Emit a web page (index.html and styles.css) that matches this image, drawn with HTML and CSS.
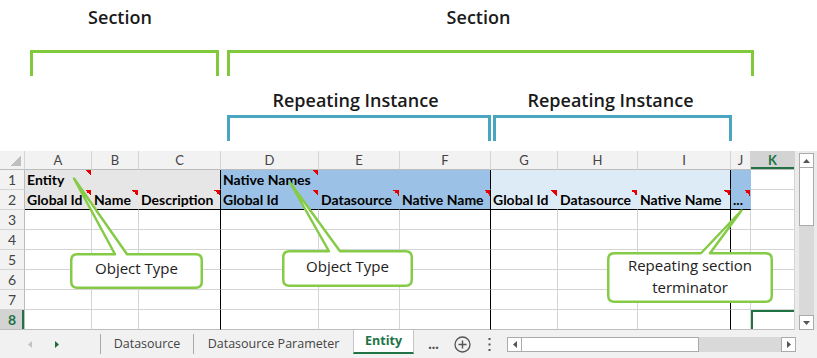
FILE: index.html
```html
<!DOCTYPE html>
<html lang="en">
<head>
    <meta charset="UTF-8">
    <title>Entity sheet layout</title>
    <link rel="stylesheet" href="styles.css">
</head>
<body>
<div class="page">

    <!-- Annotations above the sheet -->
    <div class="annot">
        <div class="sections">
            <div class="group g-sec1">
                <div class="group-label">Section</div>
                <div class="bracket green"></div>
            </div>
            <div class="group g-sec2">
                <div class="group-label">Section</div>
                <div class="bracket green"></div>
            </div>
        </div>
        <div class="instances">
            <div class="group g-inst1">
                <div class="group-label">Repeating Instance</div>
                <div class="bracket blue"></div>
            </div>
            <div class="group g-inst2">
                <div class="group-label">Repeating Instance</div>
                <div class="bracket blue"></div>
            </div>
        </div>
    </div>

    <!-- Worksheet -->
    <div class="workbook">
        <div class="sheet">
            <div class="corner"><span class="corner-tri"></span></div>
            <div class="ch">A</div><div class="ch">B</div><div class="ch">C</div><div class="ch">D</div>
            <div class="ch">E</div><div class="ch">F</div><div class="ch">G</div><div class="ch">H</div>
            <div class="ch">I</div><div class="ch">J</div><div class="ch sel">K</div>

            <div class="rh">1</div>
            <div class="c f-grey cm">Entity</div><div class="c f-grey"></div><div class="c f-grey br"></div>
            <div class="c f-blue cm">Native Names</div><div class="c f-blue"></div><div class="c f-blue br"></div>
            <div class="c f-light"></div><div class="c f-light"></div><div class="c f-light br"></div>
            <div class="c f-blue"></div><div class="c"></div>

            <div class="rh">2</div>
            <div class="c f-grey bb cm">Global Id</div><div class="c f-grey bb cm">Name</div><div class="c f-grey bb br cm">Description</div>
            <div class="c f-blue bb cm">Global Id</div><div class="c f-blue bb cm">Datasource</div><div class="c f-blue bb br cm">Native Name</div>
            <div class="c f-light bb cm">Global Id</div><div class="c f-light bb cm">Datasource</div><div class="c f-light bb br cm">Native Name</div>
            <div class="c f-blue bb cm">...</div><div class="c"></div>

            <div class="rh">3</div>
            <div class="c"></div><div class="c"></div><div class="c br"></div><div class="c"></div><div class="c"></div><div class="c br"></div>
            <div class="c"></div><div class="c"></div><div class="c br"></div><div class="c"></div><div class="c"></div>

            <div class="rh">4</div>
            <div class="c"></div><div class="c"></div><div class="c br"></div><div class="c"></div><div class="c"></div><div class="c br"></div>
            <div class="c"></div><div class="c"></div><div class="c br"></div><div class="c"></div><div class="c"></div>

            <div class="rh">5</div>
            <div class="c"></div><div class="c"></div><div class="c br"></div><div class="c"></div><div class="c"></div><div class="c br"></div>
            <div class="c"></div><div class="c"></div><div class="c br"></div><div class="c"></div><div class="c"></div>

            <div class="rh">6</div>
            <div class="c"></div><div class="c"></div><div class="c br"></div><div class="c"></div><div class="c"></div><div class="c br"></div>
            <div class="c"></div><div class="c"></div><div class="c br"></div><div class="c"></div><div class="c"></div>

            <div class="rh">7</div>
            <div class="c"></div><div class="c"></div><div class="c br"></div><div class="c"></div><div class="c"></div><div class="c br"></div>
            <div class="c"></div><div class="c"></div><div class="c br"></div><div class="c"></div><div class="c"></div>

            <div class="rh sel">8</div>
            <div class="c"></div><div class="c"></div><div class="c br"></div><div class="c"></div><div class="c"></div><div class="c br"></div>
            <div class="c"></div><div class="c"></div><div class="c br"></div><div class="c"></div><div class="c sel"></div>
        </div>

        <div class="vscroll">
            <div class="sb-btn">
                <svg width="7" height="4" viewBox="0 0 7 4"><polygon points="0,4 3.5,0 7,4" fill="#555"/></svg>
            </div>
            <div class="sb-thumb"></div>
            <div class="sb-track"></div>
            <div class="sb-btn">
                <svg width="7" height="4" viewBox="0 0 7 4"><polygon points="0,0 7,0 3.5,4" fill="#555"/></svg>
            </div>
        </div>
    </div>

    <!-- Sheet tabs -->
    <div class="tabbar">
        <div class="tab-nav">
            <svg width="4" height="7" viewBox="0 0 4 7"><polygon points="4,0 4,7 0,3.5" fill="#c2c2c2"/></svg>
            <svg class="nav-next" width="4" height="7" viewBox="0 0 4 7"><polygon points="0,0 4,3.5 0,7" fill="#1e6b3d"/></svg>
        </div>
        <div class="tab-sep"></div>
        <div class="tab">Datasource</div>
        <div class="tab-sep"></div>
        <div class="tab tab-wide">Datasource Parameter</div>
        <div class="tab tab-active">Entity</div>
        <div class="tab-tools">
            <span class="tool-more">...</span>
            <svg class="tool-add" width="17" height="17" viewBox="0 0 17 17">
                <circle cx="8.5" cy="8.5" r="7.5" fill="none" stroke="#555" stroke-width="1.3"/>
                <path d="M8.5 4.5v8M4.5 8.5h8" stroke="#555" stroke-width="1.4"/>
            </svg>
            <svg class="tool-menu" width="3" height="13" viewBox="0 0 3 13">
                <rect x="0.5" y="0" width="2" height="2" fill="#555"/>
                <rect x="0.5" y="5.5" width="2" height="2" fill="#555"/>
                <rect x="0.5" y="11" width="2" height="2" fill="#555"/>
            </svg>
        </div>
        <div class="hscroll">
            <div class="sb-btn">
                <svg width="4" height="7" viewBox="0 0 4 7"><polygon points="4,0 4,7 0,3.5" fill="#555"/></svg>
            </div>
            <div class="sb-thumb"></div>
            <div class="sb-track"></div>
            <div class="sb-btn">
                <svg width="4" height="7" viewBox="0 0 4 7"><polygon points="0,0 4,3.5 0,7" fill="#555"/></svg>
            </div>
        </div>
    </div>

    <!-- Callouts drawn over the sheet -->
    <svg class="callouts" width="817" height="358" viewBox="0 0 817 358">
        <path d="M77.25 254.25H115L74 178.5L127 254.25H195.75Q201.75 254.25 201.75 260.25V281.75Q201.75 287.75 195.75 287.75H77.25Q71.25 287.75 71.25 281.75V260.25Q71.25 254.25 77.25 254.25Z"/>
        <path d="M289.25 251.25H329L290 182.5L340 251.25H405.75Q411.75 251.25 411.75 257.25V279.75Q411.75 285.75 405.75 285.75H289.25Q283.25 285.75 283.25 279.75V257.25Q283.25 251.25 289.25 251.25Z"/>
        <path d="M614.25 253.25H701L741.5 210.5L710 253.25H765.75Q771.75 253.25 771.75 259.25V295.75Q771.75 301.75 765.75 301.75H614.25Q608.25 301.75 608.25 295.75V259.25Q608.25 253.25 614.25 253.25Z"/>
    </svg>
    <div class="callout-text c1">Object Type</div>
    <div class="callout-text c2">Object Type</div>
    <div class="callout-text c3">Repeating section<br>terminator</div>

</div>
</body>
</html>
```

FILE: styles.css
```css
body {
    margin: 0;
    background-color: #fff;
    font-family: "Open Sans", Arial, sans-serif;
}
.page {
    position: relative;
    width: 817px;
    height: 358px;
    overflow: hidden;
}

/* annotations */
.sections {
    display: flex;
    gap: 8px;
    padding-left: 30px;
    height: 76px;
}
.instances {
    display: flex;
    gap: 2px;
    padding-left: 227px;
    height: 65px;
    margin-bottom: 10px;
}
.group {
    display: flex;
    flex-direction: column;
}
.g-sec1 { width: 189px; }
.g-sec2 { width: 527px; }
.g-inst1 { width: 264px; }
.g-inst2 { width: 239px; }
.group-label {
    box-sizing: border-box;
    text-align: center;
    font-weight: 600;
    font-size: 18px;
    line-height: 24px;
    color: #1a1a1a;
    white-space: nowrap;
}
.sections .group-label {
    height: 50px;
    padding-top: 5px;
}
.g-sec1 .group-label { padding-right: 9px; }
.g-sec2 .group-label { padding-right: 24px; }
.instances .group-label {
    height: 39px;
    padding-top: 12px;
}
.g-inst1 .group-label { padding-right: 7px; }
.g-inst2 .group-label { padding-right: 4px; }
.bracket {
    flex: 1;
    border: 3px solid;
    border-bottom: 0;
}
.bracket.green { border-color: #7fc93b; }
.bracket.blue { border-color: #4aa6c0; }

/* worksheet */
.workbook {
    display: flex;
    height: 179px;
}
.sheet {
    display: grid;
    grid-template-columns: 25px 67px 47px 82px 98px 81px 91px 67px 80px 93px 20px 44px;
    grid-template-rows: 19px repeat(8, 20px);
    width: 795px;
}
.sheet > div {
    box-sizing: border-box;
    border-right: 1px solid #d4d4d4;
    border-bottom: 1px solid #d4d4d4;
}
.sheet > div:nth-last-child(-n+12) {
    border-bottom-color: #bdbdbd;
}
.corner, .ch, .rh {
    background-color: #f2f2f2;
    color: #444;
    font-family: Lato, "Liberation Sans", sans-serif;
}
.corner {
    display: flex;
    align-items: flex-end;
    justify-content: flex-end;
    padding: 0 3px 3px 0;
    border-bottom-color: #bcbcbc !important;
}
.corner-tri {
    width: 10px;
    height: 11px;
    background: linear-gradient(to top left, #bfbfbf 50%, transparent 50%);
}
.ch {
    text-align: center;
    font-size: 13px;
    line-height: 18px;
    border-bottom-color: #bcbcbc !important;
}
.rh {
    text-align: center;
    font-size: 14px;
    line-height: 20px;
    border-right-color: #bcbcbc !important;
}
.ch.sel, .rh.sel {
    background-color: #d3d3d3;
    color: #217346;
    font-weight: 700;
}
.ch.sel { box-shadow: inset 0 -2px 0 #217346; }
.rh.sel { box-shadow: inset -2px 0 0 #217346; }

.c {
    font-family: Lato, "Liberation Sans", sans-serif;
    font-weight: 700;
    font-size: 14px;
    line-height: 20px;
    color: #000;
    padding-left: 2px;
    white-space: nowrap;
}
.c.sel { box-shadow: inset 2px 2px 0 #217346; }
.f-grey { background-color: #e7e6e6; border-color: #e7e6e6 !important; }
.f-blue { background-color: #9bc2e6; border-color: #9bc2e6 !important; }
.f-light { background-color: #ddebf7; border-color: #ddebf7 !important; }
.sheet > .br { border-right-color: #000 !important; }
.sheet > .bb { border-bottom-color: #000 !important; }
.cm {
    background-image: linear-gradient(to bottom left, #e60000 50%, transparent 50%);
    background-size: 6px 6px;
    background-repeat: no-repeat;
    background-position: top right;
}

/* scrollbars */
.vscroll {
    box-sizing: border-box;
    width: 22px;
    padding: 2px 3px 0 4px;
    background-color: #ebebeb;
    display: flex;
    flex-direction: column;
}
.sb-btn {
    box-sizing: border-box;
    flex: none;
    width: 15px;
    height: 15px;
    background-color: #fff;
    border: 1px solid #ababab;
    display: flex;
    align-items: center;
    justify-content: center;
}
.sb-thumb {
    box-sizing: border-box;
    background-color: #fff;
    border: 1px solid #ababab;
    border-top: 0;
}
.vscroll .sb-thumb { height: 58px; }
.sb-track {
    flex: 1;
    background-color: #d9d9d9;
}

/* tabs */
.tabbar {
    display: flex;
    align-items: center;
    height: 28px;
    background-color: #f1f1f1;
    color: #444;
    font-size: 12.5px;
}
.tab-nav {
    width: 100px;
    display: flex;
    align-items: center;
    padding-left: 28px;
    box-sizing: border-box;
}
.nav-next { margin-left: 23px; }
.tab-sep {
    width: 1px;
    height: 20px;
    background-color: #a8a8a8;
}
.tab {
    width: 92px;
    text-align: center;
    line-height: 16px;
    white-space: nowrap;
}
.tab-wide { width: 159px; }
.tab-active {
    align-self: flex-start;
    box-sizing: border-box;
    width: 61px;
    height: 24px;
    line-height: 22px;
    background-color: #fff;
    border: 1px solid #c6c6c6;
    border-top: 0;
    border-bottom: 2px solid #217346;
    color: #217346;
    font-weight: 700;
}
.tab-tools {
    width: 93px;
    display: flex;
    align-items: center;
    padding-left: 14px;
    box-sizing: border-box;
}
.tool-more {
    width: 11px;
    font-size: 14px;
    font-weight: 700;
    line-height: 16px;
    color: #555;
    letter-spacing: -0.5px;
}
.tool-add { margin-left: 15px; }
.tool-menu { margin-left: 17px; }
.hscroll {
    display: flex;
    width: 289px;
    height: 15px;
}
.hscroll .sb-thumb {
    width: 177px;
    border: 1px solid #ababab;
    border-left: 0;
}

/* callouts */
.callouts {
    position: absolute;
    left: 0;
    top: 0;
    pointer-events: none;
}
.callouts path {
    fill: #fff;
    stroke: #86cb47;
    stroke-width: 2.5;
    stroke-linejoin: round;
}
.callout-text {
    position: absolute;
    text-align: center;
    font-size: 15px;
    line-height: 22px;
    color: #222;
}
.c1 { left: 70px; top: 257px; width: 133px; }
.c2 { left: 282px; top: 255px; width: 131px; }
.c3 { left: 607px; top: 254px; width: 166px; }
```
